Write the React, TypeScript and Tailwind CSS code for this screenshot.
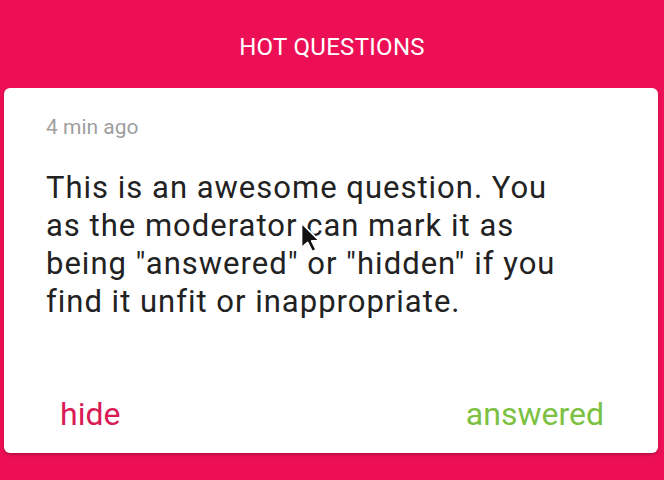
import React from 'react';

function Cursor() {
  return (
    <svg className="absolute left-[299px] top-[221px]" width="24" height="32" viewBox="0 0 19 25">
      <path d="M2 1.5 L2 21 L6.8 16.8 L10.5 24 L13.6 22.6 L10 15.6 L16.2 15.6 Z" fill="#111" stroke="#fff" strokeWidth="1.3" strokeLinejoin="round" />
    </svg>
  );
}

function App() {
  return (
    <div className="relative flex h-[480px] w-[664px] flex-col bg-[#ec0f55] font-['Roboto','Liberation_Sans',sans-serif]">
      <header className="flex h-[88px] items-center justify-center pt-[6px] text-[24px] tracking-[0.3px] text-white">
        HOT QUESTIONS
      </header>

      <div className="mx-[4px] flex h-[365px] w-[654px] flex-col rounded-[6px] bg-white shadow-[0_2px_3px_rgba(0,0,0,0.2)]">
        <div className="px-[42px] pt-[26px] text-[21px] leading-[26px] text-[#9e9e9e]">4 min ago</div>
        <p className="mt-[29px] max-w-[600px] px-[42px] text-[31px] leading-[38px] tracking-[1px] text-[#222]">
          This is an awesome question. You as the moderator can mark it as being "answered" or "hidden" if you find it unfit or inappropriate.
        </p>
        <div className="mt-auto flex items-center justify-between pl-[44px] pr-[48px] pb-[20px] text-[32px] leading-[38px]">
          <button className="px-[12px] text-[#d81b55]">hide</button>
          <button className="px-[6px] text-[#7cc142]">answered</button>
        </div>
      </div>

      <Cursor />
    </div>
  );
}

export default App;
